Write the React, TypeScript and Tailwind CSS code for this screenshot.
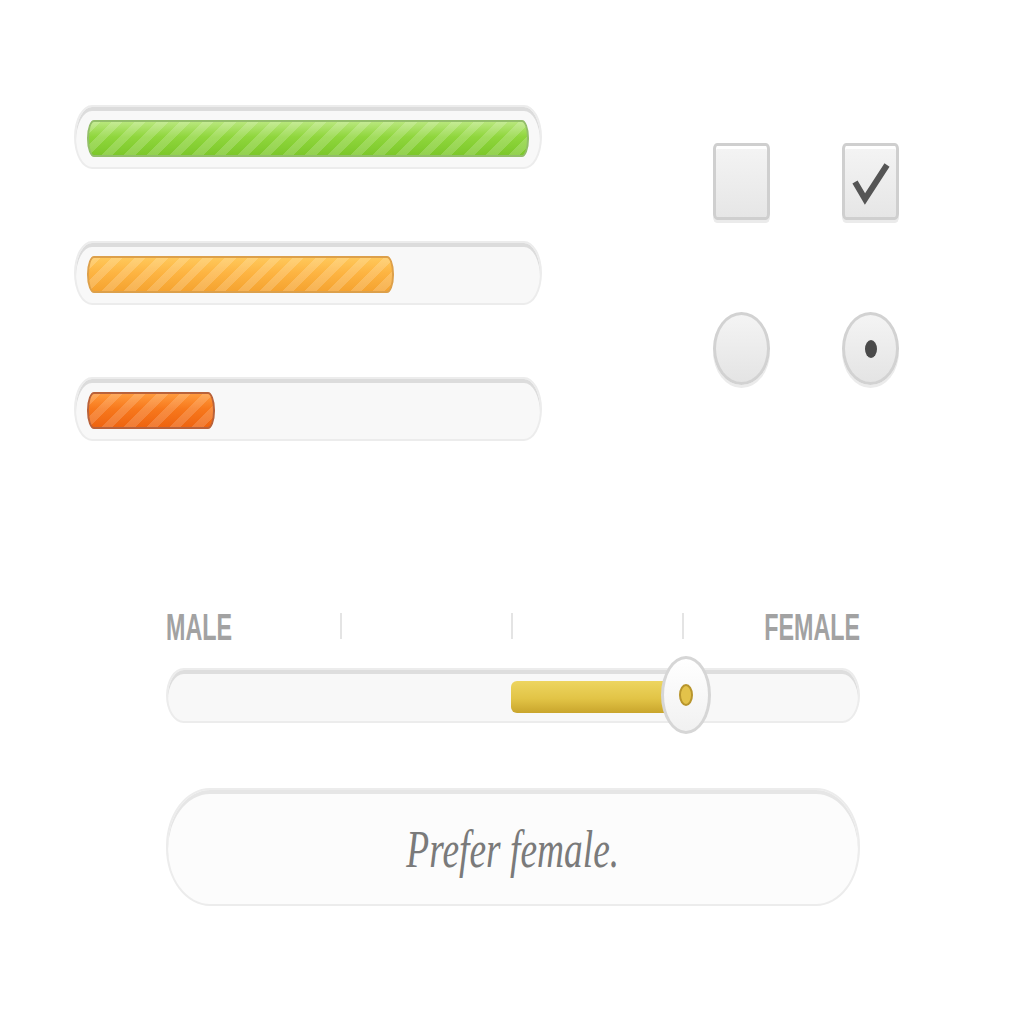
import React from "react";

interface BarProps {
  width: number;
  fill: string;
}

function ProgressBar({ width, fill }: BarProps) {
  return (
    <div className="h-[64px] w-full flex items-center px-[11px] pt-[2px] rounded-[18px/32px] border-2 border-[#ececec] bg-[#f8f8f8] shadow-[inset_0_4px_0_#dcdcdc]">
      <div
        className={`h-[37px] rounded-[7px/18px] ${fill}`}
        style={{ width }}
      />
    </div>
  );
}

const green =
  "border-2 border-[#93be6a] bg-[image:repeating-linear-gradient(135deg,rgba(255,255,255,0.18)_0_8px,transparent_8px_16px),linear-gradient(#b8e77c,#8fd63c_45%,#7cc82a)]";
const orange =
  "border-2 border-[#dda04a] bg-[image:repeating-linear-gradient(135deg,rgba(255,255,255,0.18)_0_8px,transparent_8px_16px),linear-gradient(#ffc85a,#fdb442_45%,#f5a330)]";
const red =
  "border-2 border-[#b9623a] bg-[image:repeating-linear-gradient(135deg,rgba(255,255,255,0.16)_0_8px,transparent_8px_16px),linear-gradient(#ff9a3c,#f7781c_45%,#ee6410)]";

function Checkbox({ checked }: { checked?: boolean }) {
  return (
    <div className="relative w-[57px] h-[77px] rounded-[4px/6px] border-[3px] border-[#cfcfcf] bg-[linear-gradient(#f4f4f4,#e6e6e6)] shadow-[inset_0_3px_0_#ffffff,0_3px_0_#ebebeb]">
      {checked && (
        <svg className="absolute left-0 top-0" width="51" height="71" viewBox="0 0 51 71">
          <polyline
            points="10,36 20,53 42,19"
            fill="none"
            stroke="#555"
            strokeWidth="6"
            strokeLinejoin="miter"
          />
        </svg>
      )}
    </div>
  );
}

function Radio({ checked }: { checked?: boolean }) {
  return (
    <div className="w-[57px] h-[73px] rounded-[50%] border-[3px] border-[#d2d2d2] bg-[linear-gradient(#f4f4f4,#e4e4e4)] shadow-[0_3px_0_#ebebeb] flex items-center justify-center">
      {checked && <div className="w-[12px] h-[18px] rounded-[50%] bg-[#4a4a4a]" />}
    </div>
  );
}

export default function App() {
  return (
    <div className="w-[1024px] h-[1024px] bg-white overflow-hidden font-['Liberation_Sans',sans-serif]">
      <div className="flex pt-[105px] pl-[74px]">
        <div className="w-[468px] flex flex-col gap-[72px]">
          <ProgressBar width={444} fill={green} />
          <ProgressBar width={307} fill={orange} />
          <ProgressBar width={128} fill={red} />
        </div>
        <div className="ml-[171px] mt-[38px] grid grid-cols-[57px_57px] gap-x-[72px] gap-y-[92px] h-fit">
          <Checkbox />
          <Checkbox checked />
          <Radio />
          <Radio checked />
        </div>
      </div>

      <div className="ml-[166px] w-[694px] mt-[168px]">
        <div className="relative h-[48px] flex items-start justify-between text-[#a2a2a2] font-bold text-[37px] leading-none">
          <span className="inline-block origin-left scale-x-[0.63]">MALE</span>
          <div className="absolute left-[174px] top-[4px] w-[2px] h-[26px] bg-[#e4e4e4]" />
          <div className="absolute left-[345px] top-[4px] w-[2px] h-[26px] bg-[#e4e4e4]" />
          <div className="absolute left-[516px] top-[4px] w-[2px] h-[26px] bg-[#e4e4e4]" />
          <span className="inline-block origin-right scale-x-[0.63]">FEMALE</span>
        </div>

        <div className="relative mt-[11px] h-[55px] rounded-[18px/28px] border-2 border-[#ececec] bg-[#f8f8f8] shadow-[inset_0_4px_0_#dedede] flex items-center">
          <div className="ml-[343px] mt-[2px] w-[170px] h-[32px] rounded-l-[6px] bg-[linear-gradient(#edd560,#e2c446_55%,#c9a52c)]" />
          <div className="absolute left-[493px] top-[-14px] w-[50px] h-[78px] rounded-[50%] border-[3px] border-[#d6d6d6] bg-[linear-gradient(#ffffff,#f1f1f1)] flex items-center justify-center">
            <div className="w-[14px] h-[22px] rounded-[50%] border-2 border-[#b8952c] bg-[#e3c24a]" />
          </div>
        </div>

        <div className="mt-[65px] h-[118px] rounded-[44px/58px] border-2 border-[#ececec] bg-[#fcfcfc] shadow-[inset_0_4px_0_#e6e6e6] flex items-center justify-center">
          <span className="inline-block mt-[6px] scale-x-[0.72] font-['Liberation_Serif',serif] italic text-[52px] text-[#7a7a7a] leading-none">
            Prefer female.
          </span>
        </div>
      </div>
    </div>
  );
}
